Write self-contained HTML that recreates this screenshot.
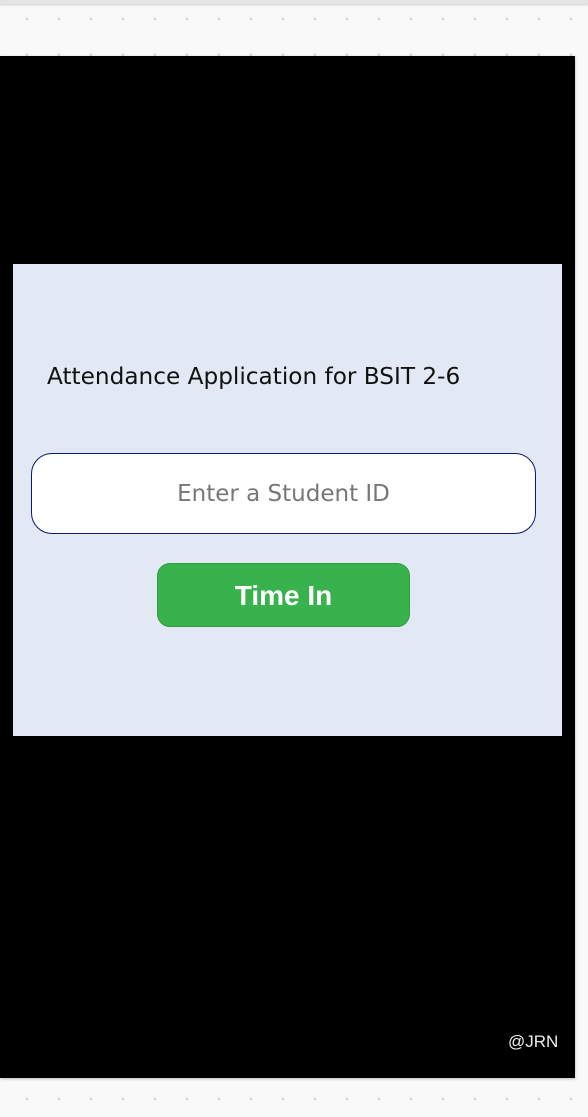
<!DOCTYPE html>
<html><head><style>
*{margin:0;padding:0;box-sizing:border-box}
body{width:588px;height:1117px;position:relative;overflow:hidden;background:#f9f9f9;font-family:"Liberation Sans",sans-serif;
background-image:radial-gradient(circle,#d8d8d8 1.3px,transparent 1.6px);background-size:32px 36px;background-position:11px 1px}
.top{position:absolute;left:0;top:0;width:588px;height:4px;background:#e4e4e4;box-shadow:0 1px 2px #ccc}
.screen{position:absolute;left:0;top:56px;width:575px;height:1022px;background:#000;box-shadow:0 1px 3px rgba(0,0,0,.25)}
.panel{position:absolute;left:13px;top:264px;width:549px;height:472px;background:#e2e9f4}
.title{position:absolute;left:47px;top:363px;font-family:"DejaVu Sans",sans-serif;font-size:23.2px;color:#111;white-space:nowrap}
.input{position:absolute;left:31px;top:453px;width:505px;height:81px;background:#fff;border:1.5px solid #0a1a6e;border-radius:21px;text-align:center;line-height:80px;font-family:"DejaVu Sans",sans-serif;font-size:23px;color:#777}
.btn{position:absolute;left:157px;top:563px;width:253px;height:64px;background:#38b24c;border:1px solid #2f9a40;border-radius:13px;color:#fff;font-weight:bold;font-size:28px;text-align:center;line-height:64px}
.jrn{position:absolute;left:508px;top:1032px;color:#eee;font-size:17px}
</style></head><body>
<div class="top"></div>
<div class="screen"></div>
<div class="panel"></div>
<div class="title">Attendance Application for BSIT 2-6</div>
<div class="input">Enter a Student ID</div>
<div class="btn">Time In</div>
<div class="jrn">@JRN</div>
</body></html>
